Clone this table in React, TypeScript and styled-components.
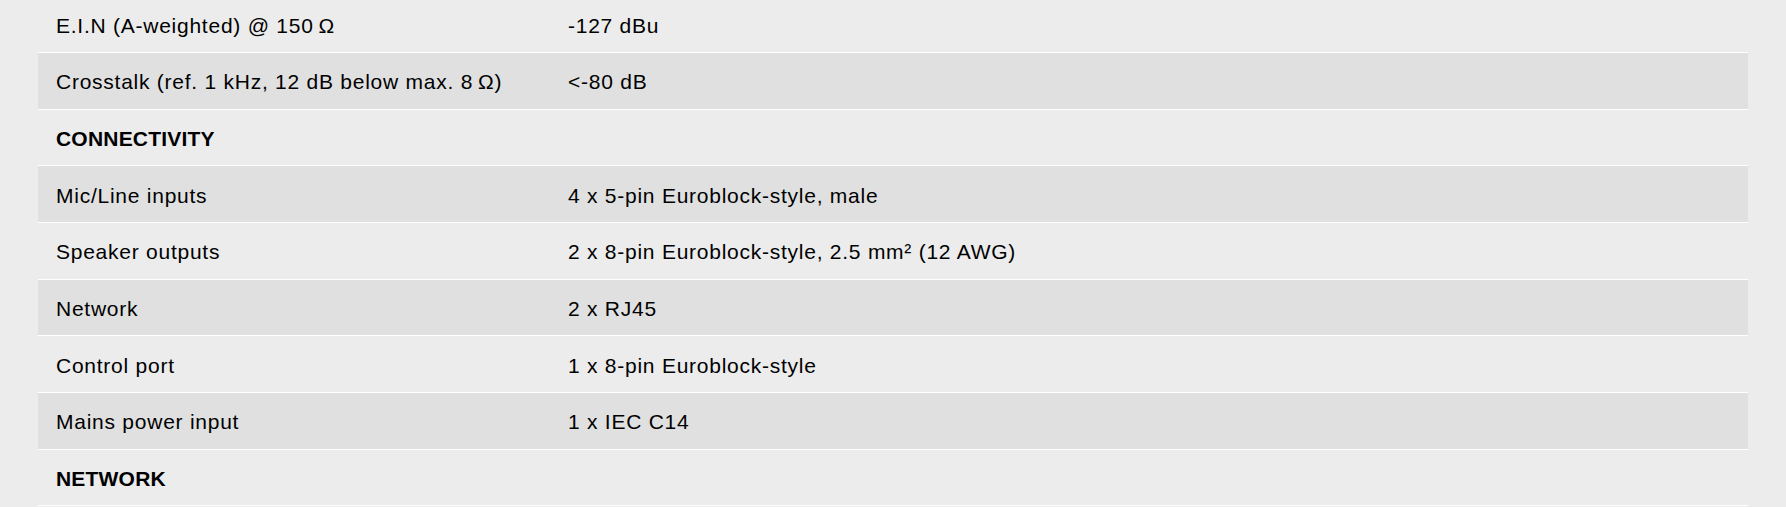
import React from 'react'
import styled, { createGlobalStyle } from 'styled-components'

const GlobalStyle = createGlobalStyle`
  html, body {
    margin: 0;
    padding: 0;
    background: #ececec;
    overflow: hidden;
  }
`

const Page = styled.div`
  padding: 0 38px;
  margin-top: -3.7px;
`

const Table = styled.div`
  display: flex;
  flex-direction: column;
  font-family: "Liberation Sans", Arial, sans-serif;
  color: #000;
`

const Row = styled.div<{ $shaded?: boolean }>`
  box-sizing: border-box;
  display: grid;
  grid-template-columns: 512px 1fr;
  align-items: center;
  height: 56.67px;
  padding: 3px 18px 0;
  border-bottom: 1px solid #ffffff;
  background: ${p => (p.$shaded ? '#e0e0e0' : '#ececec')};
  font-size: 21px;
  letter-spacing: 0.75px;
`

const Heading = styled.div`
  font-weight: 700;
  letter-spacing: 0.2px;
`

type Item = { label: string; value?: string; heading?: boolean }

const items: Item[] = [
  { label: 'E.I.N (A-weighted) @ 150\u2009Ω', value: '-127 dBu' },
  { label: 'Crosstalk (ref. 1 kHz, 12 dB below max. 8\u2009Ω)', value: '<-80 dB' },
  { label: 'CONNECTIVITY', heading: true },
  { label: 'Mic/Line inputs', value: '4 x 5-pin Euroblock-style, male' },
  { label: 'Speaker outputs', value: '2 x 8-pin Euroblock-style, 2.5 mm² (12 AWG)' },
  { label: 'Network', value: '2 x RJ45' },
  { label: 'Control port', value: '1 x 8-pin Euroblock-style' },
  { label: 'Mains power input', value: '1 x IEC C14' },
  { label: 'NETWORK', heading: true },
]

const App: React.FC = () => (
  <>
    <GlobalStyle />
    <Page>
      <Table>
        {items.map((item, i) => (
          <Row key={item.label} $shaded={i % 2 === 1}>
            {item.heading ? <Heading>{item.label}</Heading> : <div>{item.label}</div>}
            <div>{item.value}</div>
          </Row>
        ))}
      </Table>
    </Page>
  </>
)

export default App
